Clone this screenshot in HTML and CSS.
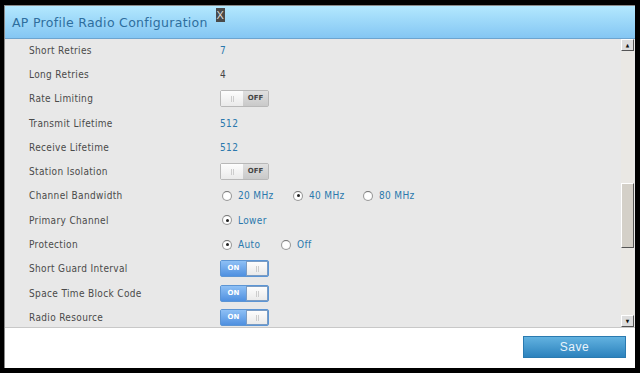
FILE: index.html
```html
<!DOCTYPE html>
<html>
<head>
    <title>AP Profile Radio Configuration</title>
    <link rel="stylesheet" href="styles.css">
</head>
<body>
    <div class="dialog">
        <div class="header">
            <span class="title">AP Profile Radio Configuration</span>
            <span class="close">X</span>
        </div>
        <div class="content">
            <div class="rows">
                <div class="row"><span class="label">Short Retries</span><span class="value link">7</span></div>
                <div class="row"><span class="label">Long Retries</span><span class="value">4</span></div>
                <div class="row"><span class="label">Rate Limiting</span>
                    <span class="toggle off"><span class="grip"></span><span class="state">OFF</span></span></div>
                <div class="row"><span class="label">Transmit Lifetime</span><span class="value link">512</span></div>
                <div class="row"><span class="label">Receive Lifetime</span><span class="value link">512</span></div>
                <div class="row"><span class="label">Station Isolation</span>
                    <span class="toggle off"><span class="grip"></span><span class="state">OFF</span></span></div>
                <div class="row"><span class="label">Channel Bandwidth</span>
                    <span class="radios">
                        <span class="radio w1"><i></i>20 MHz</span>
                        <span class="radio w2"><i class="on"></i>40 MHz</span>
                        <span class="radio"><i></i>80 MHz</span>
                    </span></div>
                <div class="row"><span class="label">Primary Channel</span>
                    <span class="radios"><span class="radio"><i class="on"></i>Lower</span></span></div>
                <div class="row"><span class="label">Protection</span>
                    <span class="radios">
                        <span class="radio w3"><i class="on"></i>Auto</span>
                        <span class="radio"><i></i>Off</span>
                    </span></div>
                <div class="row"><span class="label">Short Guard Interval</span>
                    <span class="toggle on"><span class="state">ON</span><span class="grip"></span></span></div>
                <div class="row"><span class="label">Space Time Block Code</span>
                    <span class="toggle on"><span class="state">ON</span><span class="grip"></span></span></div>
                <div class="row"><span class="label">Radio Resource</span>
                    <span class="toggle on"><span class="state">ON</span><span class="grip"></span></span></div>
            </div>
            <div class="scrollbar">
                <div class="sb-btn">&#9650;</div>
                <div class="sb-track">
                    <div class="sb-thumb"></div>
                </div>
                <div class="sb-btn">&#9660;</div>
            </div>
        </div>
        <div class="footer">
            <button class="save">Save</button>
        </div>
    </div>
</body>
</html>
```

FILE: styles.css
```css
body { margin: 0; background: #000; font-family: "DejaVu Sans Condensed", "DejaVu Sans", sans-serif; }
.dialog { width: 630px; height: 362px; margin: 5px 0 0 4px; background: #fff; border-left: 1px solid #8a8a8a; border-top: 1px solid #8a8a8a; display: flex; flex-direction: column; overflow: hidden; }
.header { height: 32px; flex: none; display: flex; align-items: flex-start; background: linear-gradient(#b3e8fe, #84c6f3); border-bottom: 1px solid #6da4cf; }
.title { font-family: "DejaVu Sans", sans-serif; font-size: 12.5px; letter-spacing: 0.3px; color: #2e6e9e; margin: 9px 0 0 7px; }
.close { margin: 2px 0 0 8px; width: 9px; height: 14px; background: #4a4a4a; color: #ddd; font-size: 11px; line-height: 14px; text-align: center; font-family: "Liberation Sans", sans-serif; }
.content { height: 288px; flex: none; display: flex; background: #e8e8e8; border-bottom: 1px solid #c8c8c8; overflow: hidden; }
.rows { flex: 1; margin-top: -1px; }
.row { height: 24.3px; display: flex; align-items: center; }
.label { width: 191px; padding-left: 24px; font-size: 10px; letter-spacing: 0.35px; color: #4a4a4a; }
.value { font-size: 10px; letter-spacing: 0.35px; color: #444; }
.link { color: #2a78ad; }
.toggle { display: flex; width: 47px; height: 15px; border: 1px solid #b8b8b8; border-radius: 2px; font-family: "DejaVu Sans", sans-serif; font-size: 7px; font-weight: bold; line-height: 15px; text-align: center; }
.toggle .grip { width: 22px; box-sizing: border-box; background: repeating-linear-gradient(90deg, transparent 0 1px, #cdcdcd 1px 2px) 9px 5px / 5px 6px no-repeat, linear-gradient(#fdfdfd, #eaeaea); }
.toggle.off .state { flex: 1; background: linear-gradient(#e0e0e0, #c9c9c9); color: #444; }
.toggle.on { border-color: #5c95d4; }
.toggle.on .state { flex: 1; background: linear-gradient(#8ec0f5, #4f90e0); color: #fff; }
.toggle.on .grip { border: 1px solid #7a9cc4; width: 22px; background-position: 8px 4px, 0 0; }
.radios { display: flex; }
.radio { display: flex; align-items: center; font-size: 10px; letter-spacing: 0.35px; color: #2a78ad; margin-left: 2px; }
.radio.w1 { width: 69px; }
.radio.w2 { width: 68px; }
.radio.w3 { width: 57px; }
.radio i { width: 8px; height: 8px; border: 1px solid #999; border-top-color: #777; border-radius: 50%; background: radial-gradient(#fff 50%, #ddd); margin-right: 6px; box-sizing: content-box; display: flex; align-items: center; justify-content: center; }
.radio i.on::after { content: ""; width: 3px; height: 3px; border-radius: 50%; background: #222; }
.scrollbar { width: 13px; margin-right: 1px; display: flex; flex-direction: column; }
.sb-btn { background: #ddd; border: 1px solid #fff; border-right-color: #555; border-bottom-color: #555; font-size: 5px; line-height: 11px; text-align: center; color: #111; box-sizing: border-box; height: 12px; }
.sb-track { flex: 1; background: #eae8e4; padding-top: 132px; }
.sb-thumb { height: 65px; background: #d4d0c8; border: 1px solid #fff; border-right-color: #555; border-bottom-color: #555; box-sizing: border-box; }
.footer { flex: 1; display: flex; justify-content: flex-end; align-items: flex-start; padding: 8px 9px 0 0; }
.save { width: 103px; height: 22px; border: 1px solid #2a7ab0; background: linear-gradient(#62b2e0, #2c82bd); color: #e8f3fb; font-family: "Liberation Sans", sans-serif; font-size: 12px; letter-spacing: 0.5px; padding: 0; }
```
